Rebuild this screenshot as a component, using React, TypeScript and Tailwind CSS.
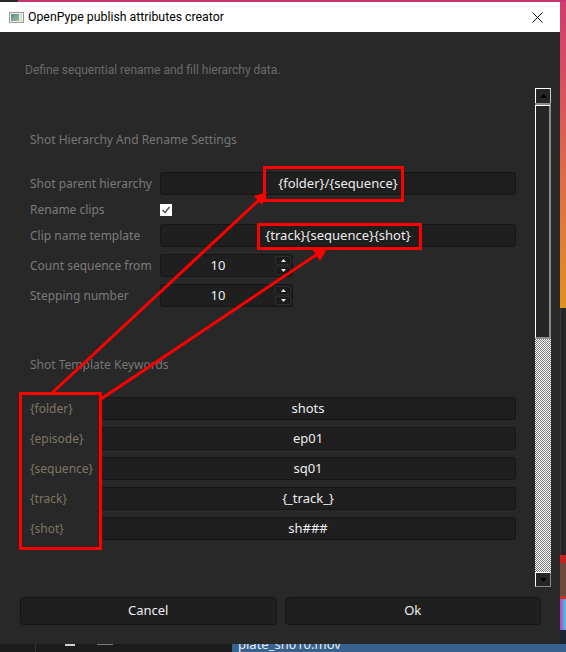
import React from "react";

function Tri({ up, color = "#000" }: { up?: boolean; color?: string }) {
  return (
    <svg width="7" height="4" viewBox="0 0 7 4">
      {up ? <polygon points="0,4 7,4 3.5,0" fill={color} /> : <polygon points="0,0 7,0 3.5,4" fill={color} />}
    </svg>
  );
}

function SmallTri({ up }: { up?: boolean }) {
  return (
    <svg width="5" height="3" viewBox="0 0 5 3">
      {up ? <polygon points="0,3 5,3 2.5,0" fill="#e8e8e8" /> : <polygon points="0,0 5,0 2.5,3" fill="#e8e8e8" />}
    </svg>
  );
}

function Field({ value, w }: { value: string; w?: string }) {
  return (
    <div className={`${w ?? "flex-1"} h-[23px] flex items-center justify-center rounded-[3px] border border-[#161616] bg-[#1f1f1f] text-[13px] text-[#eeeeee]`}>
      {value}
    </div>
  );
}

function Spin({ value }: { value: string }) {
  return (
    <div className="w-[133px] h-[23px] flex rounded-[3px] border border-[#161616] bg-[#1f1f1f]">
      <div className="flex-1 flex items-center justify-center text-[13px] text-[#eeeeee]">{value}</div>
      <div className="w-[17px] flex flex-col gap-[1px] py-[1px] pr-[1px]">
        <div className="flex-1 flex items-center justify-center rounded-[2px] bg-[#1a1a1a] border border-[#2c2c2c]">
          <SmallTri up />
        </div>
        <div className="flex-1 flex items-center justify-center rounded-[2px] bg-[#1a1a1a] border border-[#2c2c2c]">
          <SmallTri />
        </div>
      </div>
    </div>
  );
}

function Row({ label, children }: { label: string; children: React.ReactNode }) {
  return (
    <div className="flex items-center h-[23px]">
      <div className="w-[130px] text-[12px] text-[#7b7b7b] whitespace-nowrap">{label}</div>
      {children}
    </div>
  );
}

function KRow({ label, value }: { label: string; value: string }) {
  return (
    <div className="flex items-center h-[23px]">
      <div className="w-[70px] text-[12px] text-[#7d7665] whitespace-nowrap">{label}</div>
      <Field value={value} />
    </div>
  );
}

function Scrollbar() {
  return (
    <div className="w-[16px] h-full flex flex-col">
      <div className="h-[15px] shrink-0 flex items-center justify-center border-t border-l border-white border-r border-r-[#cfcfcf] bg-[#262626]">
        <Tri up />
      </div>
      <div className="h-[2px] shrink-0 bg-[#8a8a8a]" />
      <div className="h-[234px] shrink-0 border-t border-l border-white border-r-2 border-r-[#8a8a8a] border-b-2 border-b-[#8a8a8a] bg-[#262626]" />
      <div className="flex-1 bg-[repeating-conic-gradient(#ffffff_0_25%,#7c7c7c_0_50%)] bg-[length:2px_2px]" />
      <div className="h-[15px] shrink-0 flex items-center justify-center border border-t-white border-l-white border-r-[#8a8a8a] border-b-[#8a8a8a] bg-[#262626]">
        <Tri />
      </div>
    </div>
  );
}

function Annotations() {
  return (
    <svg className="absolute left-0 top-0 pointer-events-none" width="566" height="652" viewBox="0 0 566 652">
      <g fill="none" stroke="#ff0000" strokeWidth="3">
        <rect x="264.5" y="167.5" width="138" height="33" />
        <rect x="258.5" y="224.5" width="162" height="24" />
        <rect x="20.5" y="393.5" width="80" height="155" />
        <line x1="52" y1="393" x2="259" y2="200" />
        <line x1="101" y1="399" x2="316" y2="255" />
      </g>
      <polygon points="267,192 254,196 262,205" fill="#ff0000" />
      <polygon points="327,249 313,250 320,261" fill="#ff0000" />
    </svg>
  );
}

function RightStrip() {
  return (
    <div className="w-[6px] flex flex-col">
      <div className="h-[306px] bg-[linear-gradient(to_bottom,#d23b70,#d9575c_35%,#e0733e_65%,#e2901f)]" />
      <div className="h-[247px] bg-[#262626] border-l border-[#3a3a3a]" />
      <div className="h-[8px] bg-[#cf2020]" />
      <div className="h-[33px] bg-[#6e4a3c]" />
      <div className="h-[3px] bg-[#d0302a]" />
      <div className="h-[31px] bg-[linear-gradient(to_right,#c238c8,#3ad0e0)]" />
      <div className="h-[14px] bg-[#1d2430]" />
    </div>
  );
}

function BottomStrip() {
  return (
    <div className="h-[8px] flex">
      <div className="w-[232px] bg-[#1c1c1c] flex">
        <div className="w-[35px]" />
        <div className="w-px bg-[#333]" />
        <div className="w-[29px]" />
        <div className="w-[10px] h-[2px] bg-[#d0d0d0]" />
        <div className="w-[22px]" />
        <div className="w-[16px] h-[1px] bg-[#777]" />
      </div>
      <div className="flex-1 bg-[#37628f] flex items-end overflow-hidden pl-[6px]">
        <div className="text-[13px] leading-[16px] text-[#e8eef5] whitespace-nowrap">plate_sh010.mov</div>
      </div>
    </div>
  );
}

export default function App() {
  return (
    <div className="relative w-[566px] h-[652px] overflow-hidden bg-[#1c1c1c] font-['Noto_Sans',sans-serif]">
      <div className="flex h-[2px]">
        <div className="w-[18px] bg-[#2a2a2a]" />
        <div className="flex-1 bg-[#c8326e]" />
      </div>
      <div className="flex h-[642px]">
        <div className="w-[560px] flex flex-col bg-[#282828]">
          {/* Title bar */}
          <div className="h-[30px] bg-white flex items-center shrink-0">
            <div className="ml-[9px] w-[15px] h-[11px] border border-[#9a9a9a] bg-[#eeeeee] flex p-[1px]">
              <div className="w-[8px] h-full bg-[linear-gradient(135deg,#5a8a9a,#9fc08a)]" />
              <div className="flex-1 ml-[1px] bg-[#d8dde0]" />
            </div>
            <div className="ml-[4px] text-[12.3px] text-black font-['Roboto',sans-serif]">OpenPype publish attributes creator</div>
            <div className="ml-auto mr-[17px] w-[11px] h-[11px]">
              <svg width="11" height="11" viewBox="0 0 11 11">
                <path d="M0.5 0.5 L10.5 10.5 M10.5 0.5 L0.5 10.5" stroke="#111" strokeWidth="1" />
              </svg>
            </div>
          </div>
          {/* Body */}
          <div className="flex-1 flex flex-col">
            <div className="mt-[30px] pl-[25px] h-[16px] leading-[16px] text-[12px] text-[#6a6a6a] font-['Roboto',sans-serif]">
              Define sequential rename and fill hierarchy data.
            </div>
            <div className="mt-[10px] h-[499px] flex">
              <div className="flex-1 flex flex-col pl-[30px] pr-[19px]">
                <div className="mt-[44px] h-[16px] leading-[16px] text-[12px] text-[#767676]">Shot Hierarchy And Rename Settings</div>
                <div className="mt-[24px] flex flex-col">
                  <Row label="Shot parent hierarchy">
                    <Field value="{folder}/{sequence}" />
                  </Row>
                  <div className="mt-[3px]">
                    <Row label="Rename clips">
                      <div className="w-[12px] h-[12px] bg-white flex items-center justify-center">
                        <svg width="10" height="10" viewBox="0 0 10 10">
                          <path d="M1.5 5 L4 7.5 L8.5 2" stroke="#4a4a4a" strokeWidth="1.3" fill="none" />
                        </svg>
                      </div>
                    </Row>
                  </div>
                  <div className="mt-[3px]">
                    <Row label="Clip name template">
                      <Field value="{track}{sequence}{shot}" />
                    </Row>
                  </div>
                  <div className="mt-[7px]">
                    <Row label="Count sequence from">
                      <Spin value="10" />
                    </Row>
                  </div>
                  <div className="mt-[7px]">
                    <Row label="Stepping number">
                      <Spin value="10" />
                    </Row>
                  </div>
                </div>
                <div className="mt-[50px] h-[16px] leading-[16px] text-[12px] text-[#767676]">Shot Template Keywords</div>
                <div className="mt-[24px] flex flex-col gap-[7px]">
                  <KRow label="{folder}" value="shots" />
                  <KRow label="{episode}" value="ep01" />
                  <KRow label="{sequence}" value="sq01" />
                  <KRow label="{track}" value="{_track_}" />
                  <KRow label="{shot}" value="sh###" />
                </div>
              </div>
              <div className="mr-[9px] flex">
                <Scrollbar />
              </div>
            </div>
            <div className="mt-[10px] flex gap-[8px] pl-[20px] pr-[19px]">
              <button className="flex-1 h-[28px] rounded-[4px] border border-[#141414] bg-[#1f1f1f] text-[13px] text-[#eeeeee]">Cancel</button>
              <button className="flex-1 h-[28px] rounded-[4px] border border-[#141414] bg-[#1f1f1f] text-[13px] text-[#eeeeee]">Ok</button>
            </div>
          </div>
        </div>
        <RightStrip />
      </div>
      <BottomStrip />
      <Annotations />
    </div>
  );
}
